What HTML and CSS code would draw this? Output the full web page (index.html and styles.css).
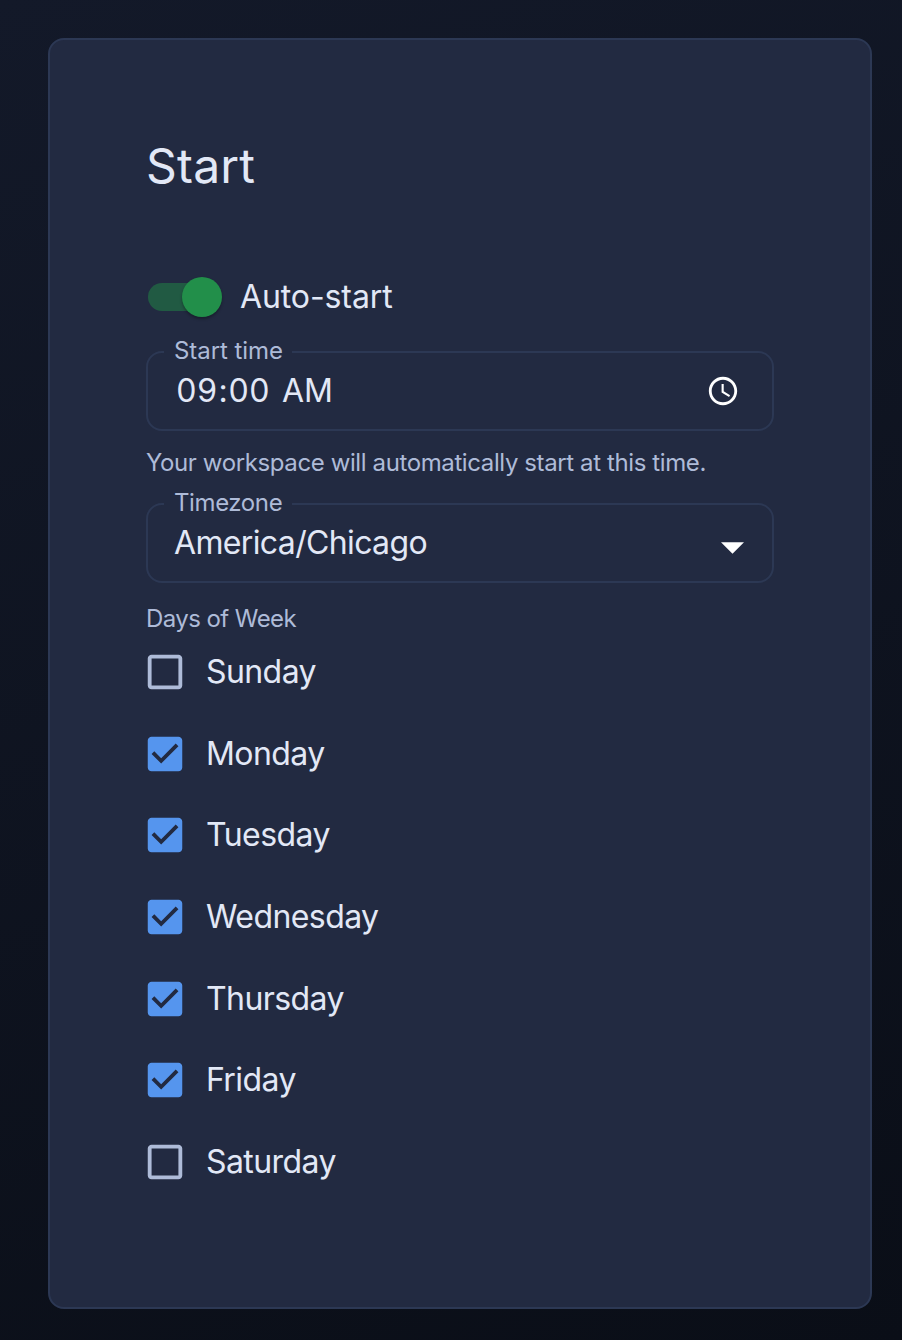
FILE: index.html
```html
<!DOCTYPE html>
<html lang="en">
<head>
<meta charset="utf-8">
<title>Schedule</title>
<link rel="stylesheet" href="styles.css">
</head>
<body>
<svg class="defs" width="0" height="0" aria-hidden="true">
  <symbol id="on" viewBox="0 0 24 24"><path d="M19 3H5c-1.11 0-2 .9-2 2v14c0 1.1.89 2 2 2h14c1.11 0 2-.9 2-2V5c0-1.1-.89-2-2-2zm-9 14l-5-5 1.41-1.41L10 14.17l7.59-7.59L19 8l-9 9z"/></symbol>
  <symbol id="off" viewBox="0 0 24 24"><path d="M19 5v14H5V5h14m0-2H5c-1.1 0-2 .9-2 2v14c0 1.1.9 2 2 2h14c1.1 0 2-.9 2-2V5c0-1.1-.9-2-2-2z"/></symbol>
</svg>
<main class="card">
  <h1 class="title">Start</h1>
  <div class="toggle">
    <span class="track"><span class="thumb"></span></span>
    <span class="toggle-label">Auto-start</span>
  </div>
  <fieldset class="field">
    <legend class="legend legend-time">Start time</legend>
    <div class="control">
      <span class="value time">09<span class="colon">:</span>00 AM</span>
      <svg class="clock" viewBox="0 0 24 24"><path d="M11.99 2C6.47 2 2 6.48 2 12s4.47 10 9.99 10C17.52 22 22 17.52 22 12S17.52 2 11.99 2zM12 20c-4.42 0-8-3.58-8-8s3.58-8 8-8 8 3.58 8 8-3.58 8-8 8z"/><path d="M12.5 7H11v6l5.25 3.15.75-1.23-4.5-2.67z"/></svg>
    </div>
  </fieldset>
  <p class="helper">Your workspace will automatically start at this time.</p>
  <fieldset class="field">
    <legend class="legend">Timezone</legend>
    <div class="control">
      <span class="value">America/Chicago</span>
      <svg class="arrow" viewBox="0 0 24 12"><path d="M0 0h24L12 12z"/></svg>
    </div>
  </fieldset>
  <p class="days-label">Days of Week</p>
  <ul class="days">
    <li class="day"><svg class="box"><use href="#off"/></svg><span class="day-name">Sunday</span></li>
    <li class="day checked"><svg class="box"><use href="#on"/></svg><span class="day-name">Monday</span></li>
    <li class="day checked"><svg class="box"><use href="#on"/></svg><span class="day-name">Tuesday</span></li>
    <li class="day checked"><svg class="box"><use href="#on"/></svg><span class="day-name">Wednesday</span></li>
    <li class="day checked"><svg class="box"><use href="#on"/></svg><span class="day-name">Thursday</span></li>
    <li class="day checked"><svg class="box"><use href="#on"/></svg><span class="day-name">Friday</span></li>
    <li class="day"><svg class="box"><use href="#off"/></svg><span class="day-name">Saturday</span></li>
  </ul>
</main>
</body>
</html>
```
FILE: styles.css
```css
* { box-sizing: border-box; }
html { height: 100%; }
body {
  margin: 0;
  height: 1340px;
  padding: 38px 30px 31px 48px;
  overflow: hidden;
  background: linear-gradient(160deg, #131929 0%, #0a0e17 100%);
  font-family: Inter, sans-serif;
  font-size: 32px;
  font-weight: 400;
  color: #e2e8f6;
}
.defs { display: none; }
.card {
  height: 1271px;
  padding: 96px 96px 0;
  border: 2px solid #2c3854;
  border-radius: 16px;
  background: #222a41;
}
.title {
  margin: 0;
  font-size: 48px;
  font-weight: 400;
  letter-spacing: .2px;
  line-height: 60px;
}
.toggle {
  display: flex;
  align-items: center;
  gap: 24px;
  height: 40px;
  margin: 81px 0 22px 2px;
}
.toggle-label, .day-name { padding-bottom: 1px; }
.toggle-label { letter-spacing: -.1px; }
.day-name { letter-spacing: -.58px; }
.track {
  width: 68px;
  height: 28px;
  padding-left: 34px;
  border-radius: 14px;
  background: #215a43;
}
.thumb {
  display: block;
  width: 40px;
  height: 40px;
  margin-top: -6px;
  border-radius: 50%;
  background: #228f4a;
  box-shadow: 0 2px 3px rgba(0, 0, 0, .3);
}
.field {
  height: 92px;
  margin: 0;
  padding: 0 32px 0 26px;
  border: 2px solid #2c3854;
  border-radius: 16px;
}
.legend {
  width: 128px;
  height: 26px;
  margin-left: -10px;
  padding-left: 10px;
  font-size: 24px;
  line-height: 24px;
  letter-spacing: -.4px;
  white-space: nowrap;
  color: #aebbd8;
}
.legend-time { letter-spacing: -.05px; }
.control {
  display: flex;
  align-items: center;
  justify-content: space-between;
  height: 52px;
}
.value { padding-bottom: 1px; letter-spacing: -.64px; }
.time {
  padding-left: 2px;
  font-variant-numeric: tabular-nums;
  letter-spacing: -.1px;
  word-spacing: 4px;
}
.colon { padding: 0 1px 0 1.5px; }
.clock { width: 34px; height: 34px; fill: #fff; }
.arrow { width: 23px; height: 12px; margin: 9px -4px 0 0; fill: #fff; }
.helper, .days-label {
  margin: 0;
  font-size: 24px;
  line-height: 40px;
  letter-spacing: -.39px;
  color: #aebbd8;
}
.helper { padding: 12px 0 8px; }
.days-label { padding-top: 16px; letter-spacing: -.57px; }
.days {
  margin: 10px 0 0;
  padding: 0;
  list-style: none;
}
.day {
  display: flex;
  align-items: center;
  gap: 18px;
  height: 46px;
  margin: 0 0 35.67px -4px;
}
.box { width: 46px; height: 46px; fill: #aebbd8; }
.checked .box { fill: #5595ee; }
```
